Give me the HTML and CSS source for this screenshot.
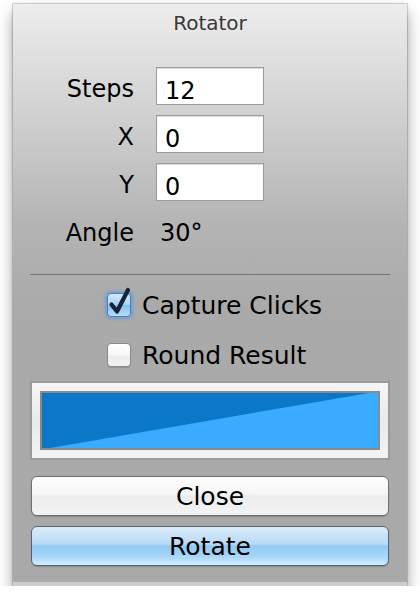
FILE: index.html
```html
<!DOCTYPE html>
<html>
<head>
<meta charset="utf-8">
<link rel="stylesheet" href="styles.css">
</head>
<body>
<div class="window">
  <div class="title">Rotator</div>
  <div class="form">
    <div class="lbl">Steps</div><div class="field">12</div>
    <div class="lbl">X</div><div class="field">0</div>
    <div class="lbl">Y</div><div class="field">0</div>
    <div class="lbl">Angle</div><div class="value">30°</div>
  </div>
  <div class="sep"></div>
  <div class="checks">
    <div class="check">
      <span class="box checked">
        <svg class="tick" width="24" height="24" viewBox="0 0 24 24"><path d="M4.5 11.5 L10 18.5 L21 -3" fill="none" stroke="#15243a" stroke-width="4.2" stroke-linecap="round" stroke-linejoin="round"/></svg>
      </span>
      <span class="ctext">Capture Clicks</span>
    </div>
    <div class="check">
      <span class="box"></span>
      <span class="ctext">Round Result</span>
    </div>
  </div>
  <div class="well">
    <div class="swatch">
      <svg width="100%" height="100%" viewBox="0 0 336 55" preserveAspectRatio="none"><polygon points="0,0 327,0 8,55 0,55" fill="#0a77c8"/></svg>
    </div>
  </div>
  <div class="buttons">
    <div class="btn">Close</div>
    <div class="btn default">Rotate</div>
  </div>
  <div class="strip"></div>
</div>
</body>
</html>
```
FILE: styles.css
```css
html, body {
  margin: 0;
  padding: 0;
  background: #ffffff;
}
body {
  font-family: "DejaVu Sans", "Liberation Sans", sans-serif;
  color: #000;
}
.window {
  margin: 4px 0 0 13px;
  width: 394px;
  height: 582px;
  box-sizing: border-box;
  display: flex;
  flex-direction: column;
  background: linear-gradient(#ededed 0px, #d6d6d6 90px, #b4b4b4 220px, #aaaaaa 300px, #a9a9a9 100%);
  box-shadow: 0 0 0 1px rgba(0,0,0,0.10), 0 0 3px rgba(0,0,0,0.2), 0 9px 14px rgba(0,0,0,0.38);
}
.title {
  height: 36px;
  padding-top: 1px;
  box-sizing: border-box;
  line-height: 36px;
  text-align: center;
  font-size: 20px;
  color: #383838;
}
.form {
  margin-top: 27px;
  display: grid;
  grid-template-columns: 121px 108px;
  column-gap: 22px;
  row-gap: 10px;
  font-size: 24px;
}
.lbl {
  height: 38px;
  box-sizing: border-box;
  padding-top: 8px;
  line-height: 28px;
  text-align: right;
}
.field {
  height: 38px;
  box-sizing: border-box;
  padding: 9px 0 0 8px;
  line-height: 28px;
  background: #fff;
  border: 1px solid #9c9c9c;
  box-shadow: inset 0 1px 1px rgba(0,0,0,0.15);
}
.value {
  height: 38px;
  box-sizing: border-box;
  padding: 8px 0 0 4px;
  line-height: 28px;
}
.sep {
  margin: 25px 17px 0 17px;
  height: 1px;
  background: #727272;
}
.checks {
  margin-top: 5px;
  padding-left: 94px;
  display: flex;
  flex-direction: column;
}
.check {
  height: 50px;
  display: flex;
  align-items: center;
  gap: 11px;
  font-size: 25px;
}
.box {
  width: 24px;
  height: 24px;
  box-sizing: border-box;
  border-radius: 4px;
  border: 1px solid #8a8a8a;
  background: linear-gradient(#ffffff 0%, #f7f7f7 50%, #ebebeb 55%, #f3f3f3 100%);
  box-shadow: 0 1px 1px rgba(0,0,0,0.15);
  position: relative;
  flex: none;
}
.box.checked {
  border: 1px solid #4f7fb3;
  background: linear-gradient(#d4e9fc 0%, #a9d2f6 48%, #86c0f0 52%, #b4defc 100%);
  box-shadow: 0 0 3px 2px rgba(70,150,235,0.55);
}
.tick {
  position: absolute;
  left: -1px;
  top: -1px;
  overflow: visible;
}
.ctext {
  line-height: 28px;
  padding-top: 2px;
}
.well {
  margin: 1px 0 0 17px;
  width: 360px;
  height: 79px;
  box-sizing: border-box;
  border: 2px solid #9a9a9a;
  padding: 8px;
  background: linear-gradient(#f7f7f7 0%, #e9e9e9 50%, #f4f4f4 100%);
}
.swatch {
  height: 59px;
  box-sizing: border-box;
  border: 2px solid #8a8a8a;
  background: #3aabff;
}
.swatch svg {
  display: block;
}
.buttons {
  margin: 16px 0 0 18px;
  width: 358px;
  display: flex;
  flex-direction: column;
  gap: 10px;
}
.btn {
  height: 40px;
  box-sizing: border-box;
  border: 1px solid #6e6e6e;
  border-radius: 6px;
  padding-top: 1px;
  line-height: 38px;
  text-align: center;
  font-size: 25px;
  background: linear-gradient(#fefefe 0%, #f6f6f6 45%, #ececec 50%, #f3f3f3 100%);
  box-shadow: 0 1px 1px rgba(0,0,0,0.2);
}
.btn.default {
  border-color: #56647a;
  background: linear-gradient(#dbecfb 0%, #b9daf6 45%, #92c8f2 50%, #a7d7f8 78%, #d2edfd 100%);
}
.strip {
  margin-top: auto;
  height: 4px;
  background: #cdcdcd;
}
```
